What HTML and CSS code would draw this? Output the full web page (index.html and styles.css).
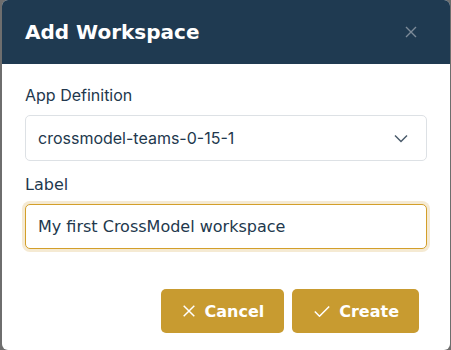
FILE: index.html
```html
<!DOCTYPE html>
<html lang="en">
<head>
    <meta charset="UTF-8">
    <meta name="viewport" content="width=device-width, initial-scale=1.0">
    <title>Add Workspace</title>
    <link rel="stylesheet" href="styles.css">
</head>
<body>
    <div class="dialog">
        <header class="dialog-header">
            <h1>Add Workspace</h1>
            <button class="close" type="button" aria-label="Close">
                <svg width="12" height="12" viewBox="0 0 12 12"><path d="M1 1L11 11M11 1L1 11" stroke="currentColor" stroke-width="1.4" fill="none"/></svg>
            </button>
        </header>
        <form class="dialog-body">
            <label class="field-label">App Definition</label>
            <div class="select">
                <span>crossmodel-teams-0-15-1</span>
                <svg width="14" height="9" viewBox="0 0 14 9"><path d="M1 1.5L7 7.5L13 1.5" stroke="currentColor" stroke-width="1.5" fill="none"/></svg>
            </div>
            <label class="field-label label-gap">Label</label>
            <input class="text-input" type="text" value="My first CrossModel workspace">
            <div class="actions">
                <button class="btn" type="button">
                    <svg width="12" height="12" viewBox="0 0 12 12"><path d="M0.7 0.7L11.3 11.3M11.3 0.7L0.7 11.3" stroke="currentColor" stroke-width="1.5" fill="none"/></svg>
                    Cancel
                </button>
                <button class="btn" type="submit">
                    <svg width="16" height="11" viewBox="0 0 16 11"><path d="M0.8 5.5L5.5 10.2L15.2 0.5" stroke="currentColor" stroke-width="1.5" fill="none"/></svg>
                    Create
                </button>
            </div>
        </form>
    </div>
</body>
</html>
```

FILE: styles.css
```css
body {
    margin: 0;
    padding: 0;
    background: #6e6e6e;
    overflow: hidden;
}
.dialog {
    width: 448px;
    height: 350px;
    margin-left: 2px;
    background: #fff;
    border-radius: 6px;
    overflow: hidden;
}
.dialog-header {
    background: #1f3a51;
    height: 64px;
    display: flex;
    align-items: center;
    justify-content: space-between;
    padding: 0 33px 0 23px;
}
.dialog-header h1 {
    margin: 0;
    color: #fff;
    font-family: "DejaVu Sans", sans-serif;
    font-weight: bold;
    font-size: 20px;
}
.close {
    background: none;
    border: none;
    padding: 0;
    color: #7d8b99;
    display: flex;
}
.dialog-body {
    padding: 22px 23px 0 23px;
    display: flex;
    flex-direction: column;
}
.field-label {
    font-family: Inter, sans-serif;
    font-size: 16px;
    line-height: 19px;
    color: #22384d;
    margin-bottom: 10px;
}
.label-gap {
    font-family: "DejaVu Sans", sans-serif;
    margin-top: 14px;
}
.select {
    height: 46px;
    box-sizing: border-box;
    border: 1px solid #dde1e5;
    border-radius: 5px;
    display: flex;
    align-items: center;
    justify-content: space-between;
    padding: 0 18px 0 12px;
    font-family: Inter, sans-serif;
    font-size: 16px;
    color: #22384d;
}
.select svg {
    color: #4a5b6b;
}
.text-input {
    height: 45px;
    box-sizing: border-box;
    border: 1px solid #d39f2a;
    border-radius: 5px;
    box-shadow: 0 0 0 3px #f5ead3;
    padding: 0 12px;
    font-family: "DejaVu Sans", sans-serif;
    font-size: 16px;
    color: #22384d;
    outline: none;
}
.actions {
    display: flex;
    justify-content: flex-end;
    gap: 8px;
    margin-top: 40px;
    padding-right: 8px;
}
.btn {
    height: 44px;
    background: #c89b30;
    color: #fff;
    border: none;
    border-radius: 5px;
    font-family: "DejaVu Sans", sans-serif;
    font-weight: bold;
    font-size: 16px;
    display: flex;
    align-items: center;
    gap: 9px;
    padding: 0 20px 0 22px;
}
```
